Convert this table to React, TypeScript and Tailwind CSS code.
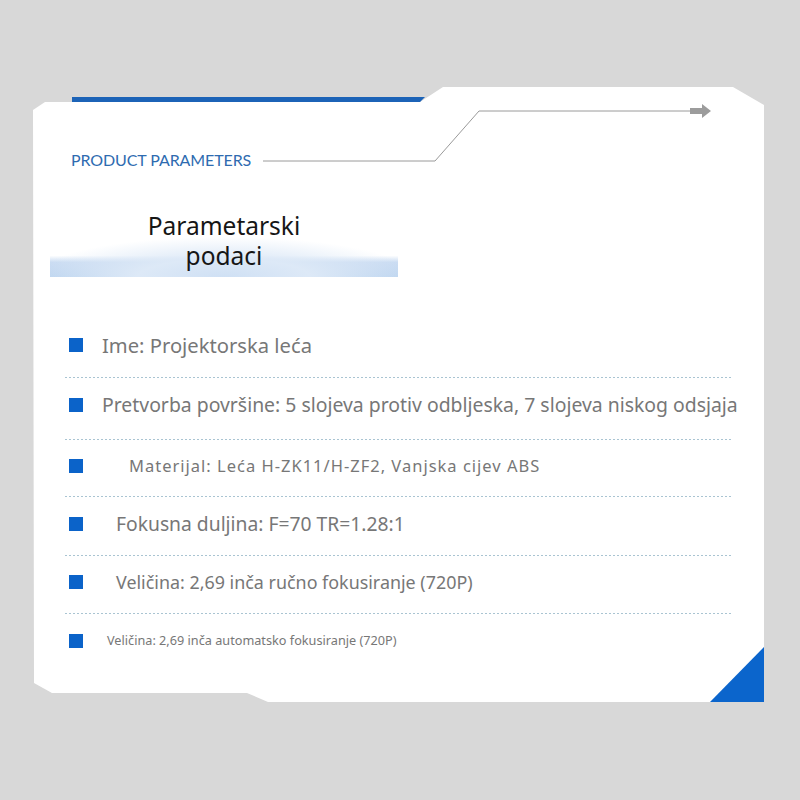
import React from "react";

const rows = [
  { text: "Ime: Projektorska leća", indent: "ml-[19px]", size: "text-[20.2px]", h: "h-[60px] pb-[4px]" },
  { text: "Pretvorba površine: 5 slojeva protiv odbljeska, 7 slojeva niskog odsjaja", indent: "ml-[19px]", size: "text-[19.4px]", h: "h-[61px] pb-[8px]" },
  { text: "Materijal: Leća H-ZK11/H-ZF2, Vanjska cijev ABS", indent: "ml-[46px]", size: "text-[16.5px] tracking-[1px]", h: "h-[56px] pb-[4px]" },
  { text: "Fokusna duljina: F=70 TR=1.28:1", indent: "ml-[33px]", size: "text-[19.3px]", h: "h-[58px] pb-[4px]" },
  { text: "Veličina: 2,69 inča ručno fokusiranje (720P)", indent: "ml-[33px]", size: "text-[17.9px]", h: "h-[57px] pb-[5px]" },
  { text: "Veličina: 2,69 inča automatsko fokusiranje (720P)", indent: "ml-[24px]", size: "text-[12.7px]", h: "h-[54px]" },
];

function CardShape() {
  return (
    <svg className="absolute inset-0" width="731" height="615" viewBox="0 0 731 615" aria-hidden="true">
      <polygon
        fill="#ffffff"
        points="0,23 12,15 387,15 410,0 700,0 731,18 731,615 235,615 214,606 19,606 1,596"
      />
      <polygon fill="#1c63b7" points="39,10 392,10 387,15 39,15" />
      <polygon fill="#0b65cc" points="731,560 731,615 677,615" />
    </svg>
  );
}

function Connector() {
  return (
    <svg width="449" height="60" viewBox="0 0 449 60" className="ml-[12px] shrink-0" aria-hidden="true">
      <polyline points="0,58 172,58 216,8 428,8" fill="none" stroke="#9a9a9a" strokeWidth="1" />
      <rect x="427" y="5" width="12" height="6" fill="#9c9c9c" />
      <polygon points="439,1 448,8 439,15" fill="#9c9c9c" />
    </svg>
  );
}

export default function App() {
  return (
    <div className="min-h-[800px] w-[800px] bg-[#d8d8d8] pt-[87px] pl-[33px] font-['Noto_Sans',sans-serif]">
      <div className="relative w-[731px] h-[615px]">
        <CardShape />

        <div className="relative">
          {/* header */}
          <div className="flex items-start h-[76px] pt-[16px] pl-[38px]">
            <div className="w-[180px] mt-[47px] leading-5 whitespace-nowrap text-[16px] tracking-[-0.1px] text-[#2e6bb0] font-['Lato',sans-serif]">
              PRODUCT PARAMETERS
            </div>
            <Connector />
          </div>

          {/* title */}
          <div className="ml-[17px] mt-[47px] w-[348px] h-[67px] pt-[1px] flex flex-col items-center bg-[radial-gradient(ellipse_55%_60%_at_50%_100%,#cfe0f4_0%,#dde9f7_45%,rgba(255,255,255,0)_100%),linear-gradient(to_bottom,#ffffff_0%,#ffffff_68%,#cadcf2_78%,#bcd4ef_100%)]">
            <div className="text-[24.5px] leading-[30px] text-[#161616]">Parametarski</div>
            <div className="text-[24.5px] leading-[30px] text-[#161616]">podaci</div>
          </div>

          {/* list */}
          <div className="mt-[40px]">
            {rows.map((r, i) => (
              <div key={i}>
                {i > 0 && (
                  <div className="ml-[32px] w-[668px] h-px bg-[repeating-linear-gradient(to_right,#a9c4d2_0_2px,transparent_2px_4px)]" />
                )}
                <div className={`flex items-center ${r.h}`}>
                  <div className="ml-[36px] w-[14px] h-[14px] bg-[#0b63c9] shrink-0" />
                  <span className={`${r.indent} ${r.size} whitespace-nowrap text-[#777777]`}>{r.text}</span>
                </div>
              </div>
            ))}
          </div>
        </div>
      </div>
    </div>
  );
}
